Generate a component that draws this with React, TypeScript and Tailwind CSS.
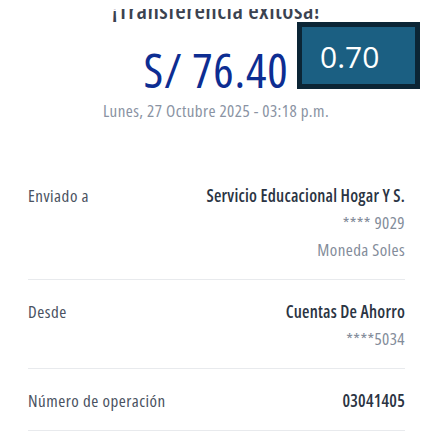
import React from "react";

type Row = { label: string; value: string; sub: string[] };

const rows: Row[] = [
  { label: "Enviado a", value: "Servicio Educacional Hogar Y S.", sub: ["**** 9029", "Moneda Soles"] },
  { label: "Desde", value: "Cuentas De Ahorro", sub: ["****5034"] },
  { label: "Número de operación", value: "03041405", sub: [] },
];

export default function App() {
  return (
    <div className="relative w-[422px] h-[437px] overflow-hidden bg-white font-['Open_Sans',sans-serif] font-stretch-condensed">
      <div className="flex flex-col items-center pl-[10px]">
        <div className="mt-[9px] h-[13px] overflow-hidden flex flex-col justify-end">
          <div className="text-[24px] leading-[24px] font-semibold tracking-[0.45px] text-[#3b4250] whitespace-nowrap">
            ¡Transferencia exitosa!
          </div>
        </div>
        <div className="mt-[24px] text-[48px] leading-[48px] font-normal tracking-[0.8px] text-[#0d2d92] whitespace-nowrap">
          S/ 76.40
        </div>
        <div className="mt-[7px] text-[17px] leading-[20px] tracking-[0.42px] text-[#8a93a3] whitespace-nowrap">
          Lunes, 27 Octubre 2025 - 03:18 p.m.
        </div>
      </div>

      <div className="mt-[43px] pl-[28px] pr-[17px]">
        {rows.map((r) => (
          <div
            key={r.label}
            className="flex justify-between pt-[18px] pb-[16px] border-b border-[#e8eaed] text-[17px] leading-[27px]"
          >
            <div className="text-[#4a5261] tracking-[0.5px]">{r.label}</div>
            <div className="flex flex-col items-end">
              <div className="font-semibold tracking-[0.22px] text-[#2b3443]">{r.value}</div>
              {r.sub.map((s) => (
                <div key={s} className="text-[#838c9a] tracking-[0.4px]">
                  {s}
                </div>
              ))}
            </div>
          </div>
        ))}
      </div>

      <div className="absolute left-[297px] top-[22px] w-[123px] h-[67px] border-[5px] border-[#0b2535] bg-[#1b5f82] pl-[18px] pt-[15px]">
        <div className="font-stretch-normal text-[30px] leading-[29px] text-white">0.70</div>
      </div>
    </div>
  );
}
